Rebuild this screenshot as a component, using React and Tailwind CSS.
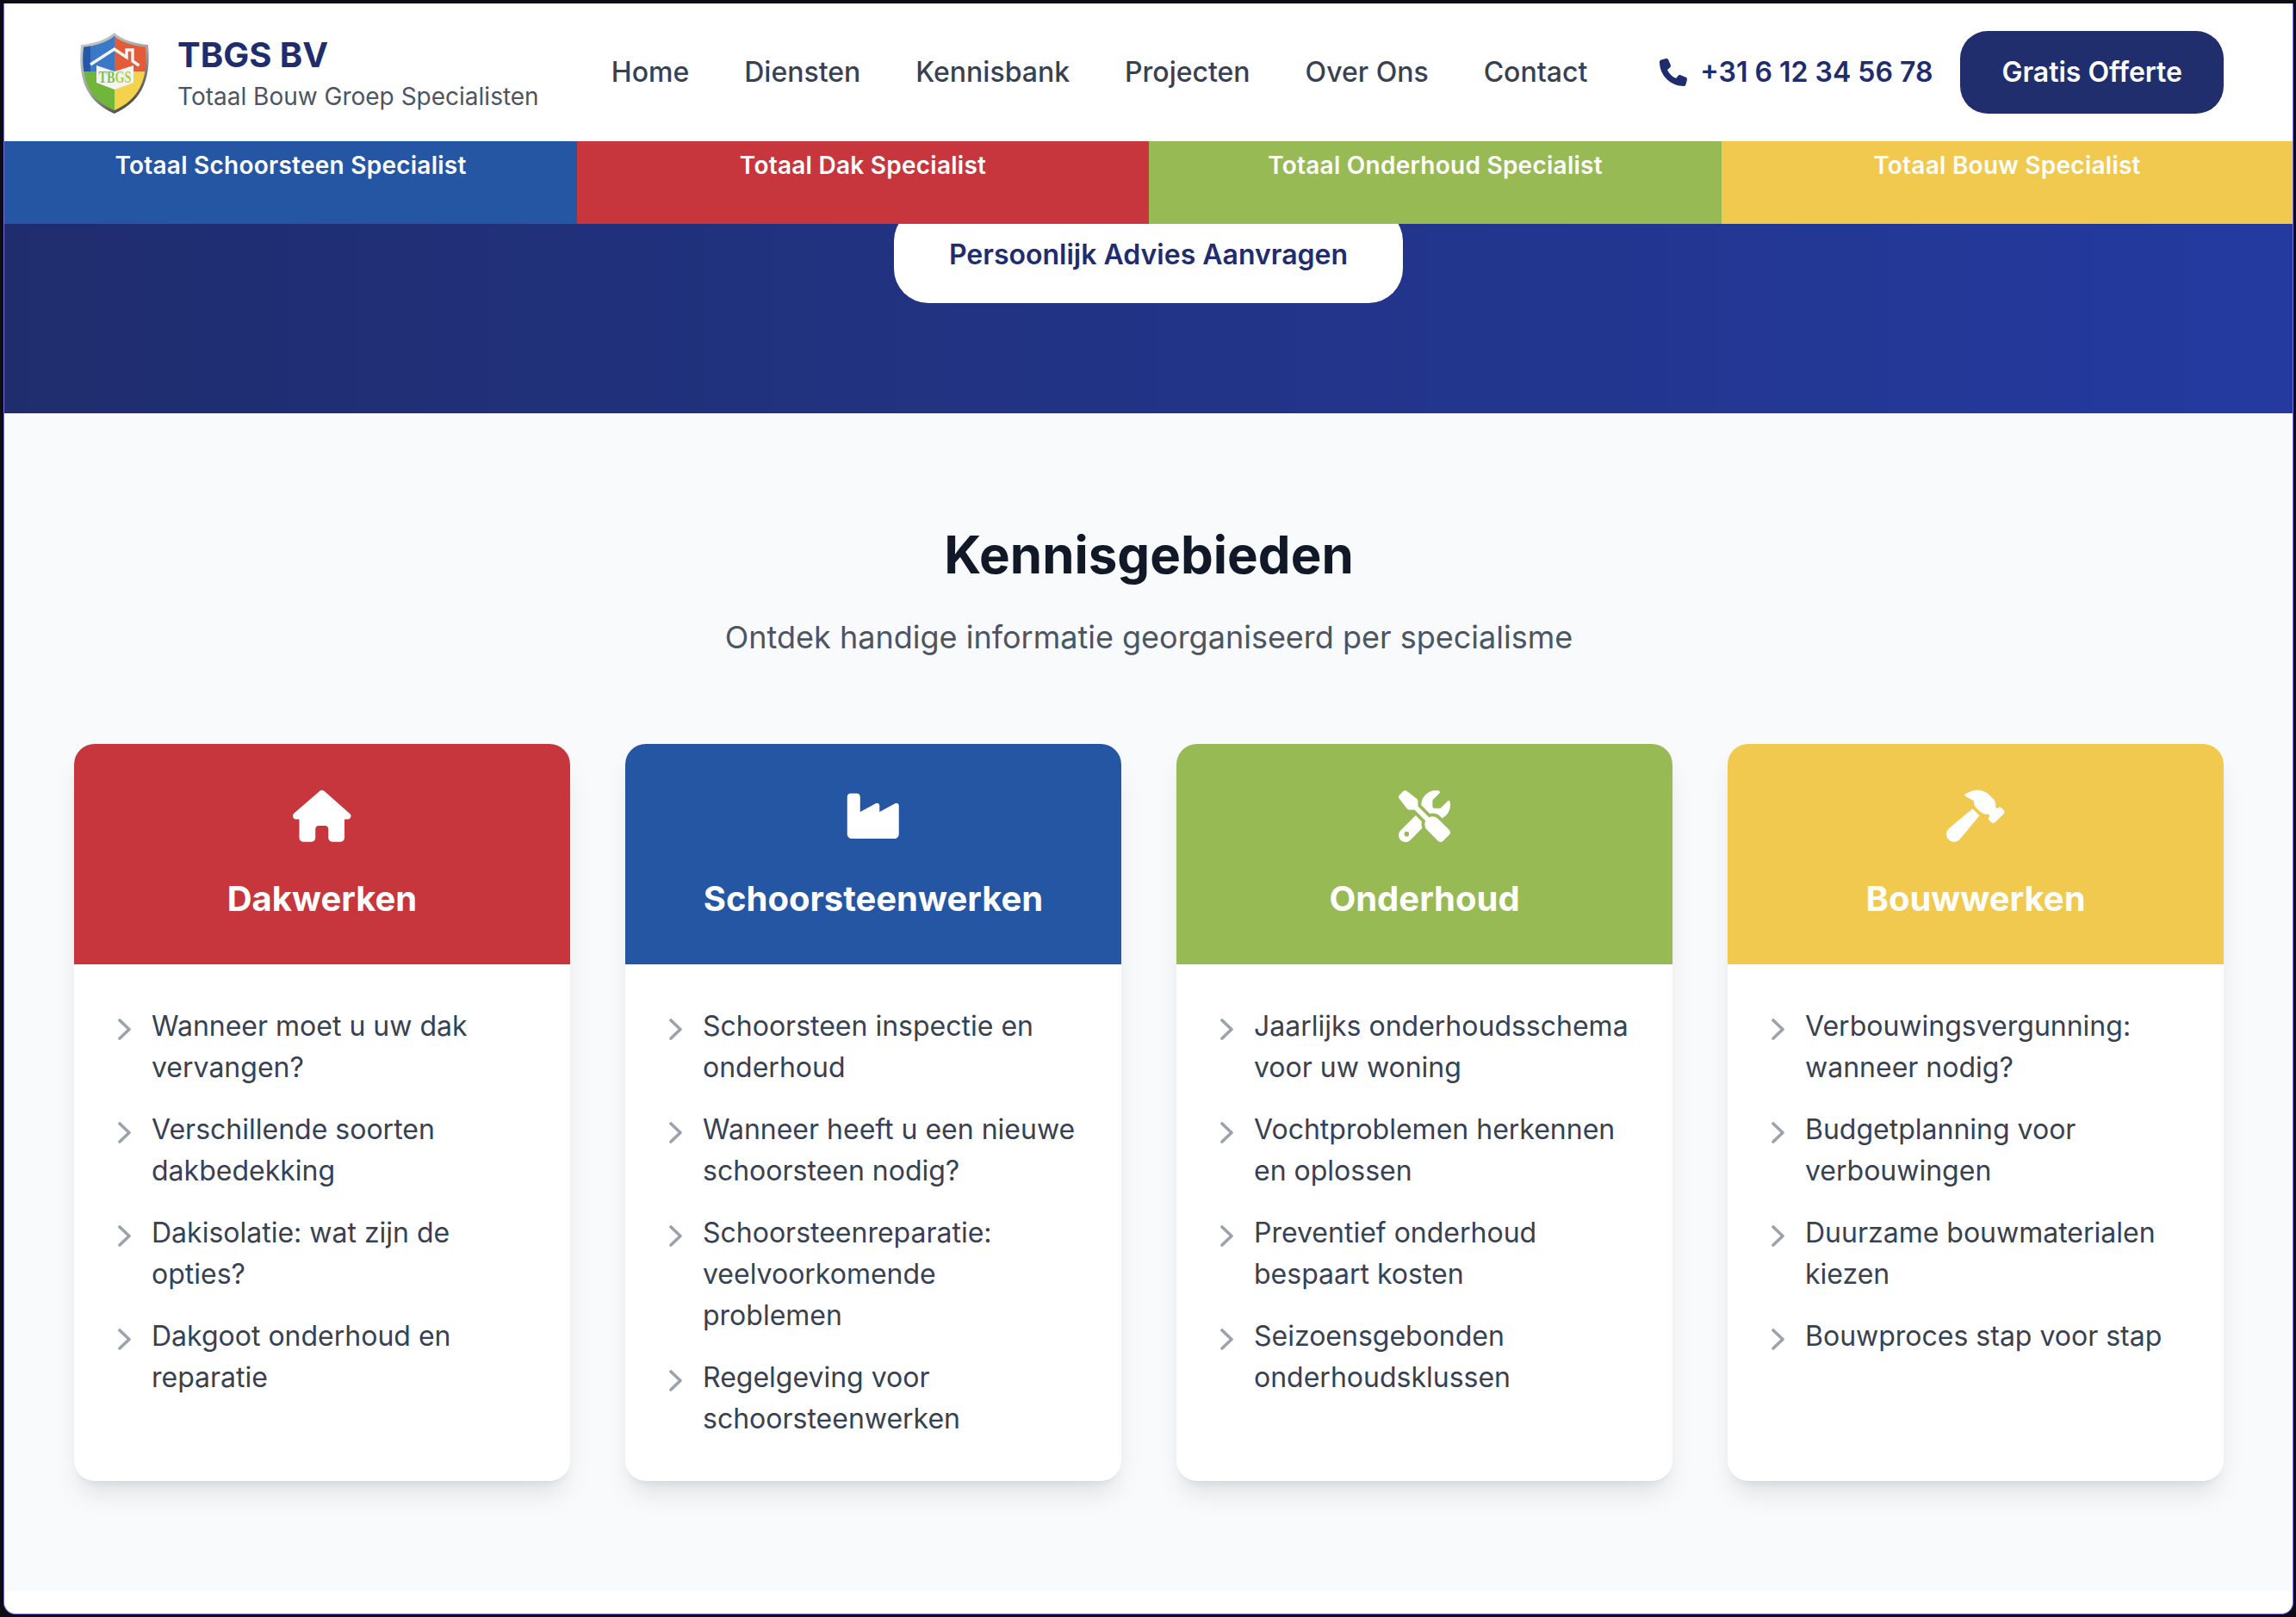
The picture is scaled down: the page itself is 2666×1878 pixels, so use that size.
import { FaHouse, FaIndustry, FaScrewdriverWrench, FaHammer, FaPhone } from 'react-icons/fa6';

const NAV = ['Home', 'Diensten', 'Kennisbank', 'Projecten', 'Over Ons', 'Contact'];

const CARDS = [
  {
    title: 'Dakwerken',
    bg: 'bg-[#c6363c]',
    icon: FaHouse,
    iconSize: 67.5,
    items: ['Wanneer moet u uw dak vervangen?', 'Verschillende soorten dakbedekking', 'Dakisolatie: wat zijn de opties?', 'Dakgoot onderhoud en reparatie'],
  },
  {
    title: 'Schoorsteenwerken',
    bg: 'bg-[#2456a4]',
    icon: FaIndustry,
    iconSize: 67.5,
    items: ['Schoorsteen inspectie en onderhoud', 'Wanneer heeft u een nieuwe schoorsteen nodig?', 'Schoorsteenreparatie: veelvoorkomende problemen', 'Regelgeving voor schoorsteenwerken'],
  },
  {
    title: 'Onderhoud',
    bg: 'bg-[#97ba55]',
    icon: FaScrewdriverWrench,
    iconSize: 60,
    items: ['Jaarlijks onderhoudsschema voor uw woning', 'Vochtproblemen herkennen en oplossen', 'Preventief onderhoud bespaart kosten', 'Seizoensgebonden onderhoudsklussen'],
  },
  {
    title: 'Bouwwerken',
    bg: 'bg-[#f2c94f]',
    icon: FaHammer,
    iconSize: 67.5,
    items: ['Verbouwingsvergunning: wanneer nodig?', 'Budgetplanning voor verbouwingen', 'Duurzame bouwmaterialen kiezen', 'Bouwproces stap voor stap'],
  },
];

const STRIP = [
  { label: 'Totaal Schoorsteen Specialist', bg: 'bg-[#2456a4]' },
  { label: 'Totaal Dak Specialist', bg: 'bg-[#c6363c]' },
  { label: 'Totaal Onderhoud Specialist', bg: 'bg-[#97ba55]' },
  { label: 'Totaal Bouw Specialist', bg: 'bg-[#f2c94f]' },
];

const SHIELD = 'M45.7 2C37 10 21 15 7 16C4 50 9 80 45.7 96C82 80 88 50 85 16C71 15 54 10 45.7 2Z';

function Logo() {
  return (
    <svg viewBox="0 0 96 96" className="w-[96px] h-[96px] shrink-0 ml-[1px]">
      <defs>
        <linearGradient id="rim" x1="0" y1="0" x2="0.6" y2="1">
          <stop offset="0" stopColor="#d0d0d0" />
          <stop offset="0.6" stopColor="#a0a0a0" />
          <stop offset="1" stopColor="#4a4a4a" />
        </linearGradient>
        <linearGradient id="letters" x1="0" y1="0" x2="1" y2="0">
          <stop offset="0.5" stopColor="#7cc041" />
          <stop offset="0.5" stopColor="#a9cf45" />
        </linearGradient>
        <clipPath id="inner">
          <path d={SHIELD} transform="translate(45.7 49) scale(0.92) translate(-45.7 -49)" />
        </clipPath>
      </defs>
      <path d={SHIELD} fill="url(#rim)" />
      <g clipPath="url(#inner)">
        <rect x="0" y="0" width="46" height="47" fill="#3a78c8" />
        <rect x="0" y="0" width="18" height="47" fill="#2458a6" />
        <rect x="46" y="0" width="50" height="47" fill="#e25c38" />
        <rect x="0" y="47" width="46" height="49" fill="#6fb63a" />
        <rect x="46" y="47" width="50" height="49" fill="#f3d24c" />
      </g>
      <path d="M18 39L45.7 21L60 30.5V22H67V35L74.5 40" fill="none" stroke="#f4f4f4" strokeWidth="3.4" />
      <path d="M25 40L46 47L68 40V60L46 68L25 60Z" fill="#f4f4f4" />
      <text x="27.5" y="60" fontSize="19" fontWeight="700" fontFamily="'Liberation Serif', serif" fill="url(#letters)" textLength="38" lengthAdjust="spacingAndGlyphs">TBGS</text>
    </svg>
  );
}

function Chevron() {
  return (
    <svg viewBox="0 0 15 25" className="w-[15px] h-[25px] shrink-0 mt-[15px] mr-[24px] ml-[3px]" fill="none" stroke="#9ca3af" strokeWidth="3.6" strokeLinecap="round" strokeLinejoin="round">
      <path d="M2 2L13 12.5L2 23" />
    </svg>
  );
}

function Card({ card }) {
  const Icon = card.icon;
  return (
    <div className="bg-white rounded-[24px] overflow-hidden shadow-[0_20px_30px_-6px_rgba(0,0,0,0.1),0_8px_12px_-8px_rgba(0,0,0,0.1)]">
      <div className={`${card.bg} h-[256px] flex flex-col items-center pt-[54px] text-white`}>
        <div className="h-[60px] flex items-center">
          <Icon size={card.iconSize} />
        </div>
        <h3 className="mt-[38px] text-[40px] leading-[56px] font-bold">{card.title}</h3>
      </div>
      <ul className="p-[48px] flex flex-col gap-[24px]">
        {card.items.map((item) => (
          <li key={item} className="flex items-start text-[32px] leading-[48px] text-[#374151]">
            <Chevron />
            <span>{item}</span>
          </li>
        ))}
      </ul>
    </div>
  );
}

export default function App() {
  return (
    <div className="min-h-[1878px] bg-[#0c0c14] pt-[4px] pl-[5px] pr-[4px] pb-[4px] font-['Inter',sans-serif]">
      <div className="h-[1870px] bg-white rounded-[14px] rounded-t-none border-l border-r border-b border-[#7a6de0] overflow-hidden -ml-px -mr-px box-content">
        <header className="h-[160px] bg-white flex items-center pl-[81px] pr-[80px]">
          <Logo />
          <div className="ml-[23px]">
            <div className="text-[40px] leading-[56px] font-bold text-[#1e2d6e]">TBGS BV</div>
            <div className="text-[28px] leading-[40px] text-[#4b5563]">Totaal Bouw Groep Specialisten</div>
          </div>
          <nav className="ml-auto flex items-center gap-[64px] text-[32px] leading-[48px] font-medium text-[#374151]">
            {NAV.map((n) => (
              <a key={n}>{n}</a>
            ))}
          </nav>
          <div className="ml-[84px] flex items-center text-[#1f2d6e] text-[32px] leading-[48px] font-semibold">
            <FaPhone size={32} className="mr-[15px]" />
            +31 6 12 34 56 78
          </div>
          <button className="ml-[32px] h-[96px] px-[48px] rounded-[32px] bg-[#212e6e] text-white text-[32px] font-semibold">Gratis Offerte</button>
        </header>

        <div className="relative z-10 grid grid-cols-[665px_664px_665px_1fr] h-[96px]">
          {STRIP.map((s) => (
            <div key={s.label} className={`${s.bg} text-white text-center text-[28px] leading-[40px] tracking-[0.25px] font-semibold pt-[8px]`}>
              {s.label}
            </div>
          ))}
        </div>

        <section className="bg-gradient-to-r from-[#1f2d6e] to-[#243a9f] pb-[128px] flex justify-center">
          <a className="-mt-[20px] h-[112px] flex items-center px-[64px] rounded-[40px] bg-white text-[#1f2d6e] text-[32px] font-semibold">Persoonlijk Advies Aanvragen</a>
        </section>

        <section className="bg-[#f9fafb] pt-[128px] pb-[128px] pl-[81px] pr-[80px]">
          <h2 className="text-center text-[60px] leading-[72px] font-bold text-[#111827]">Kennisgebieden</h2>
          <p className="mt-[32px] mb-[96px] text-center text-[36px] leading-[56px] text-[#4b5563]">Ontdek handige informatie georganiseerd per specialisme</p>
          <div className="grid grid-cols-4 gap-[64px]">
            {CARDS.map((c) => (
              <Card key={c.title} card={c} />
            ))}
          </div>
        </section>
      </div>
    </div>
  );
}
